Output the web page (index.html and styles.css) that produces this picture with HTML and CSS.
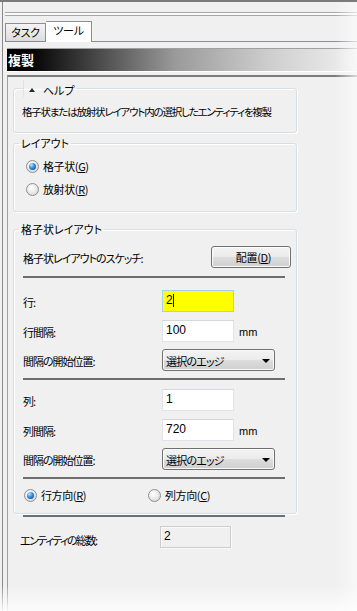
FILE: index.html
```html
<!DOCTYPE html>
<html lang="ja">
<head>
<meta charset="utf-8">
<title>複製</title>
<link rel="stylesheet" href="styles.css">
</head>
<body>
<div class="window">
  <div class="grip"></div>
  <div class="tabs">
    <div class="tab">タスク</div>
    <div class="tab active">ツール</div>
  </div>
  <div class="header">複製</div>
  <div class="panel">
    <fieldset class="group help">
      <legend class="help-legend"><span class="collapse"><span class="tri"></span></span><span>ヘルプ</span></legend>
      <p class="help-text">格子状または放射状レイアウト内の選択したエンティティを複製</p>
    </fieldset>

    <fieldset class="group layout">
      <legend>レイアウト</legend>
      <div class="radio-row"><span class="radio checked"></span><span class="rlabel">格子状(<u>G</u>)</span></div>
      <div class="radio-row second"><span class="radio"></span><span class="rlabel">放射状(<u>R</u>)</span></div>
    </fieldset>

    <fieldset class="group grid">
      <legend>格子状レイアウト</legend>
      <div class="row sketch">
        <span class="label grow">格子状レイアウトのスケッチ:</span>
        <div class="btn">配置(<u>D</u>)</div>
      </div>
      <div class="sep s1"></div>
      <div class="row r1">
        <span class="label">行:</span>
        <div class="input focus"><span class="val">2</span><span class="caret"></span></div>
      </div>
      <div class="row r2">
        <span class="label">行間隔:</span>
        <div class="input"><span class="val">100</span></div>
        <span class="unit">mm</span>
      </div>
      <div class="row r3">
        <span class="label">間隔の開始位置:</span>
        <div class="combo"><span class="ctext">選択のエッジ</span><span class="arrow"></span></div>
      </div>
      <div class="sep s2"></div>
      <div class="row r4">
        <span class="label">列:</span>
        <div class="input"><span class="val">1</span></div>
      </div>
      <div class="row r2">
        <span class="label">列間隔:</span>
        <div class="input"><span class="val">720</span></div>
        <span class="unit">mm</span>
      </div>
      <div class="row r3">
        <span class="label">間隔の開始位置:</span>
        <div class="combo"><span class="ctext">選択のエッジ</span><span class="arrow"></span></div>
      </div>
      <div class="sep s3"></div>
      <div class="radio-row dir">
        <div class="opt first"><span class="radio checked"></span><span class="rlabel">行方向(<u>R</u>)</span></div>
        <div class="opt"><span class="radio"></span><span class="rlabel">列方向(<u>C</u>)</span></div>
      </div>
    </fieldset>
    <div class="sep outer"></div>

    <div class="row total">
      <span class="label tlabel">エンティティの総数:</span>
      <div class="readonly"><span class="val">2</span></div>
    </div>
  </div>
  <div class="fade-r"></div>
  <div class="fade-b"></div>
</div>
</body>
</html>
```

FILE: styles.css
```css
* { box-sizing: border-box; }

html, body { margin: 0; padding: 0; }

body {
  width: 357px;
  height: 611px;
  overflow: hidden;
  background: #f0f0f0;
  border-top: 2px solid #7b7b7b;
  font-family: "Noto Sans CJK JP", "Noto Sans", sans-serif;
  font-size: 11px;
  line-height: 14px;
  color: #000;
  font-feature-settings: "palt" 1;
}

u { text-decoration: underline; text-underline-offset: 1px; }

.window {
  position: relative;
  height: 609px;
  margin-left: 2px;
  border-left: 1px solid #8a8a8a;
  display: flex;
  flex-direction: column;
}

.grip {
  margin: 10px 0 0 2px;
  height: 4px;
  border-top: 1px solid #a6a6a6;
  border-bottom: 1px solid #a6a6a6;
  background: #f9f9f9;
}

.tabs {
  margin: 5px 0 0 2px;
  height: 21px;
  border-bottom: 1px solid #898c95;
  display: flex;
  align-items: flex-end;
}

.tab {
  width: 41px;
  height: 18px;
  border: 1px solid #8c8e94;
  border-bottom: none;
  background: linear-gradient(#f4f4f4, #dcdcdc);
  text-align: center;
  line-height: 16px;
  border-radius: 1px 1px 0 0;
  letter-spacing: -0.3px;
}

.tab.active {
  width: 46px;
  height: 21px;
  margin-bottom: -1px;
  background: #ffffff;
  line-height: 17px;
  border-left: none;
}

.header {
  margin: 6px 0 0 4px;
  height: 24px;
  border-top: 1px solid #a0a0a0;
  border-bottom: 1px solid #ffffff;
  background: linear-gradient(to right, #000 0%, #000 6%, #9a9a9a 48%, #cecece 75%, #f0f0f0 100%);
  color: #fff;
  font-weight: bold;
  font-size: 13px;
  line-height: 22px;
  padding-left: 1px;
  font-feature-settings: normal;
}

.panel {
  flex: 1;
  margin: 3px 0 0 4px;
  border-left: 1px solid #a0a0a0;
  border-top: 2px solid #7c7c7c;
  padding-left: 5px;
}

.group {
  width: 284px;
  margin: 0;
  padding: 0;
  border: 1px solid #d5dfe5;
  border-radius: 3px;
  box-shadow: inset 1px 1px 0 #ffffff, 1px 1px 0 #ffffff;
  min-inline-size: 0;
}

.group legend {
  padding: 0 2px;
  margin-left: 5px;
  line-height: 14px;
}

.help { margin-top: 3px; padding: 8px 0 13px 0; }

.help .help-legend {
  margin-left: 9px;
  padding: 0 2px 0 0;
  height: 17px;
  display: flex;
  align-items: flex-end;
}

.collapse {
  width: 16px;
  height: 17px;
  border-left: 1px solid #e2e2e2;
  display: flex;
  align-items: center;
  justify-content: center;
  padding-top: 3px;
  margin-right: 4px;
}

.tri {
  width: 0;
  height: 0;
  border-left: 3px solid transparent;
  border-right: 3px solid transparent;
  border-bottom: 4px solid #2a2a2a;
}

.help-text {
  margin: 0 0 0 8px;
  white-space: nowrap;
  font-size: 10.5px;
  letter-spacing: -1.2px;
}

.layout { margin-top: 3px; padding: 6px 0 12px 0; }

.radio-row {
  height: 20px;
  display: flex;
  align-items: center;
  margin-left: 12px;
}

.radio-row.second { margin-top: 3px; }

.radio {
  width: 13px;
  height: 13px;
  flex: none;
  border-radius: 50%;
  border: 1px solid #8e8f8f;
  background: radial-gradient(circle at 40% 35%, #ffffff 0%, #ececec 45%, #cdcdcd 100%);
  display: flex;
  align-items: center;
  justify-content: center;
}

.radio.checked::after {
  content: "";
  width: 7px;
  height: 7px;
  border-radius: 50%;
  background: radial-gradient(circle at 35% 30%, #bfe8ff 0%, #2e8ddb 45%, #0d3d84 100%);
}

.rlabel { margin-left: 4px; letter-spacing: -0.4px; }

.grid { margin-top: 10px; padding: 10px 0 8px 0; }

.row {
  height: 22px;
  display: flex;
  align-items: center;
  margin-left: 9px;
}

.label {
  width: 139px;
  flex: none;
  padding-top: 2px;
  letter-spacing: -1px;
}
.label.grow { flex: 1; width: auto; }

.btn {
  width: 80px;
  height: 22px;
  margin-right: 5px;
  border: 1px solid #707070;
  border-radius: 3px;
  background: linear-gradient(#f3f3f3 0%, #ebebeb 50%, #dddddd 51%, #cfcfcf 100%);
  box-shadow: inset 0 0 0 1px #fcfcfc;
  text-align: center;
  line-height: 20px;
  padding-left: 5px;
  letter-spacing: -0.3px;
}

.sep {
  width: 262px;
  height: 2px;
  margin-left: 9px;
  background: #6e6e6e;
}

.s1 { margin-top: 8px; }
.r1 { margin-top: 12px; }
.r2 { margin-top: 8px; }
.r3 { margin-top: 7px; }
.s2 { margin-top: 7px; }
.r4 { margin-top: 9px; }
.s3 { margin-top: 7px; }

.input {
  width: 72px;
  height: 22px;
  background: #fff;
  border: 1px solid #e2e3ea;
  border-top-color: #d5d7dc;
  display: flex;
  align-items: center;
  padding: 0 0 2px 3px;
  font-family: "Liberation Sans", Arial, sans-serif;
  font-size: 12px;
}

.input.focus {
  background: #ffff00;
  border-color: #a9cdee;
}

.caret {
  width: 1px;
  height: 13px;
  background: #00006e;
}

.unit {
  margin-left: 5px;
  padding-top: 2px;
  font-family: "Liberation Sans", Arial, sans-serif;
  font-size: 11px;
}

.combo {
  width: 113px;
  height: 22px;
  border: 1px solid #707070;
  border-radius: 3px;
  background: linear-gradient(#f3f3f3 0%, #ebebeb 50%, #dddddd 51%, #cfcfcf 100%);
  box-shadow: inset 0 0 0 1px #fbfbfb;
  display: flex;
  align-items: center;
  justify-content: space-between;
  padding: 1px 4px 0 3px;
}

.ctext { letter-spacing: -0.8px; }

.arrow {
  width: 0;
  height: 0;
  border-left: 4px solid transparent;
  border-right: 4px solid transparent;
  border-top: 4px solid #000;
}

.dir { margin-top: 6px; margin-left: 10px; }

.opt { display: flex; align-items: center; }
.opt.first { width: 124px; }

.sep.outer { margin-top: 1px; margin-left: 10px; }

.total { margin-top: 9px; margin-left: 7px; }
.label.tlabel { width: 140px; padding-top: 5px; letter-spacing: -1.5px; }

.readonly {
  width: 71px;
  height: 22px;
  border: 1px solid #cdcdcd;
  box-shadow: inset 1px 1px 0 #fafafa, 1px 1px 0 #fafafa;
  background: #f0f0f0;
  padding: 2px 0 0 3px;
  font-family: "Liberation Sans", Arial, sans-serif;
  font-size: 12px;
  line-height: 14px;
}

.fade-r {
  position: absolute;
  top: -2px;
  right: 0;
  width: 22px;
  height: 611px;
  background: linear-gradient(to right, rgba(250, 250, 250, 0), rgba(250, 250, 250, 0.75));
  pointer-events: none;
}

.fade-b {
  position: absolute;
  left: -3px;
  bottom: 0;
  width: 357px;
  height: 26px;
  background: linear-gradient(rgba(253, 253, 253, 0), rgba(253, 253, 253, 0.9));
  pointer-events: none;
}
```
